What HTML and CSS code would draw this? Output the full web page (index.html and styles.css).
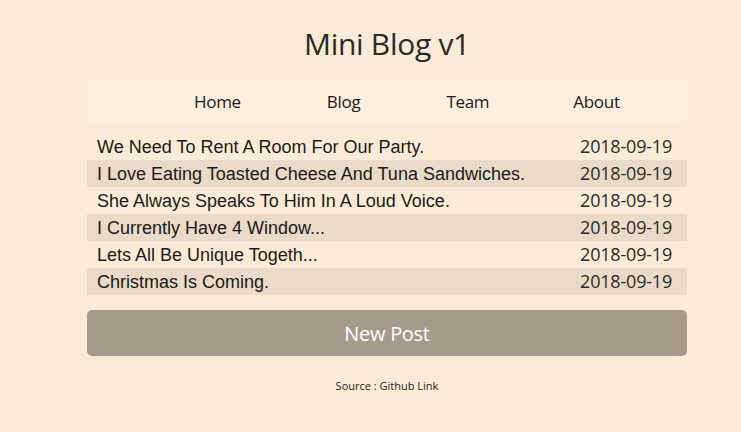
FILE: index.html
```html
<!DOCTYPE html>
<html>
<head>
<meta charset="utf-8">
<link rel="stylesheet" href="styles.css">
</head>
<body>
<div class="app">
  <h1 class="title">Mini Blog v1</h1>
  <nav class="nav">
    <a class="nav-item">Home</a>
    <a class="nav-item">Blog</a>
    <a class="nav-item">Team</a>
    <a class="nav-item">About</a>
  </nav>
  <ul class="posts">
    <li class="post"><span class="post-title">We Need To Rent A Room For Our Party.</span><span class="post-date">2018-09-19</span></li>
    <li class="post"><span class="post-title">I Love Eating Toasted Cheese And Tuna Sandwiches.</span><span class="post-date">2018-09-19</span></li>
    <li class="post"><span class="post-title">She Always Speaks To Him In A Loud Voice.</span><span class="post-date">2018-09-19</span></li>
    <li class="post"><span class="post-title">I Currently Have 4 Window...</span><span class="post-date">2018-09-19</span></li>
    <li class="post"><span class="post-title">Lets All Be Unique Togeth...</span><span class="post-date">2018-09-19</span></li>
    <li class="post"><span class="post-title">Christmas Is Coming.</span><span class="post-date">2018-09-19</span></li>
  </ul>
  <button class="new-post">New Post</button>
  <p class="source">Source : Github Link</p>
</div>
</body>
</html>
```
FILE: styles.css
```css
html, body {
  margin: 0;
  padding: 0;
  background: #faebd7;
}
body {
  font-family: "Open Sans", "Noto Sans", sans-serif;
  color: #222;
}
.app {
  width: 600px;
  margin: 0 0 0 87px;
  padding-top: 24px;
  display: flex;
  flex-direction: column;
}
.title {
  margin: 0;
  text-align: center;
  font-weight: 400;
  font-size: 30px;
  line-height: 40px;
  color: #2a2a2a;
  letter-spacing: -0.3px;
}
.nav {
  margin-top: 16px;
  height: 42px;
  background: #fbeedf;
  display: flex;
  align-items: center;
  padding-left: 107px;
  gap: 86px;
}
.nav-item {
  font-size: 17px;
  color: #1a1a1a;
  letter-spacing: -0.3px;
}
.nav-item:last-child {
  margin-left: -2px;
}
.posts {
  list-style: none;
  margin: 11px 0 0;
  padding: 0;
}
.post {
  height: 27px;
  line-height: 27px;
  display: flex;
  align-items: baseline;
  justify-content: space-between;
  padding: 0 15px 0 10px;
}
.post:nth-child(even) {
  background: #e9dbc8;
}
.post-title {
  font-family: "Liberation Sans", Arial, sans-serif;
  font-size: 18px;
  color: #1a1a1a;
  padding-top: 1px;
}
.post-date {
  font-size: 18px;
  color: #2a2a2a;
  letter-spacing: -0.2px;
}
.new-post {
  margin-top: 15px;
  height: 46px;
  border: none;
  border-radius: 5px;
  background: #a59b8c;
  color: #fff;
  font-family: "Open Sans", "Noto Sans", sans-serif;
  font-size: 20px;
  letter-spacing: -0.3px;
}
.source {
  margin: 22px 0 0;
  text-align: center;
  font-size: 11px;
  color: #222;
}
```
